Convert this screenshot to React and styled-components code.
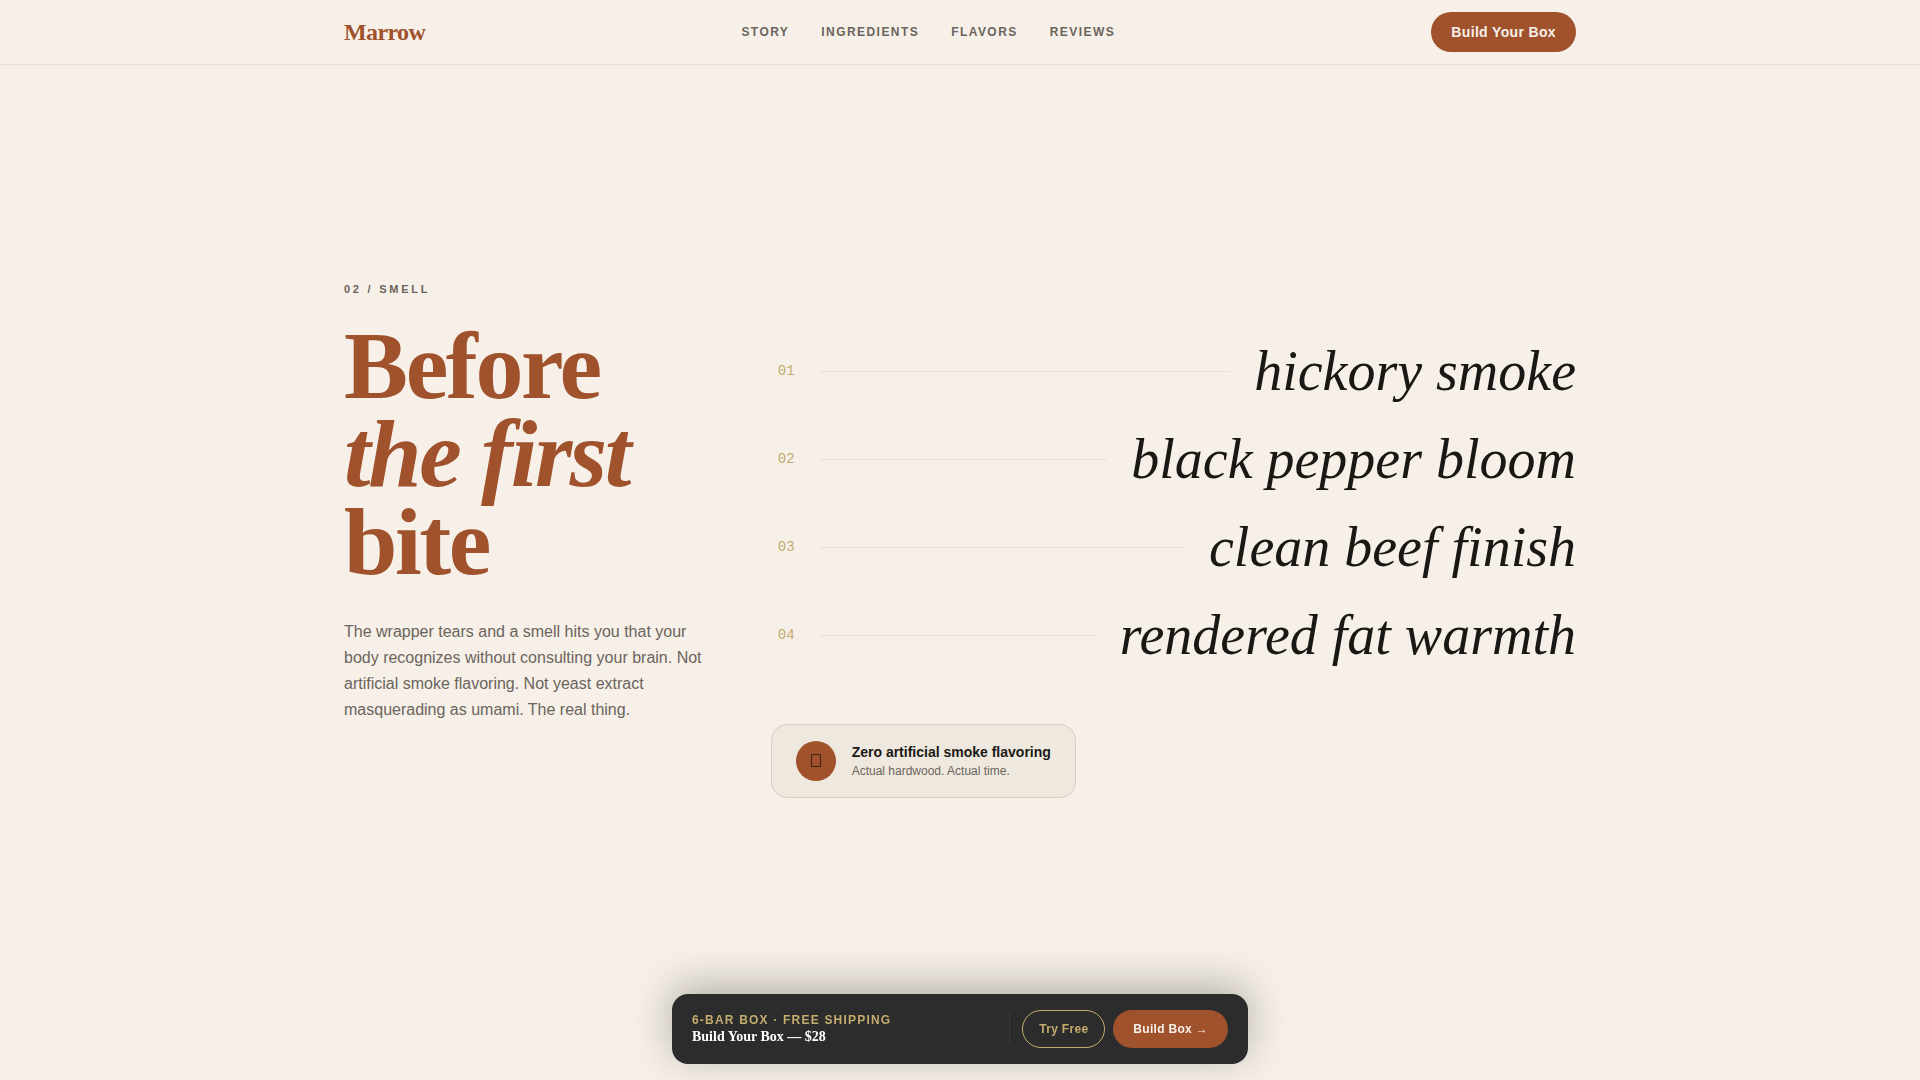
import React from 'react';
import styled, { createGlobalStyle, ThemeProvider } from 'styled-components';

const theme = {
  cream: '#f6f0e8',
  sand: '#efe8de',
  line: '#e8e1d9',
  rust: '#a0522d',
  gold: '#c4ac6e',
  ink: '#1a1814',
  muted: '#6b645c',
  char: '#2c2c2c',
  serif: '"Liberation Serif", serif',
  sans: '"Liberation Sans", sans-serif',
  mono: '"Liberation Mono", monospace',
};

const GlobalStyle = createGlobalStyle`
  * {
    box-sizing: border-box;
  }

  body {
    margin: 0;
    background: ${theme.cream};
    color: ${theme.ink};
    font-family: ${theme.sans};
  }

  h1, p, ol {
    margin: 0;
    padding: 0;
  }
`;

const Container = styled.div`
  width: 100%;
  max-width: 1280px;
  margin: 0 auto;
  padding: 0 24px;
`;

const Header = styled.header`
  position: fixed;
  top: 0;
  left: 0;
  right: 0;
  z-index: 10;
  background: ${(props) => props.theme.cream};
  border-bottom: 1px solid ${(props) => props.theme.line};
`;

const HeaderInner = styled(Container)`
  display: flex;
  align-items: center;
  justify-content: space-between;
  height: 64px;
`;

const Logo = styled.a`
  font: 700 24px/36px ${(props) => props.theme.serif};
  letter-spacing: -0.025em;
  color: ${(props) => props.theme.rust};
  text-decoration: none;
`;

const Nav = styled.nav`
  display: flex;
  gap: 32px;
`;

const NavLink = styled.a`
  font-size: 12px;
  line-height: 18px;
  font-weight: 600;
  letter-spacing: 0.12em;
  text-transform: uppercase;
  text-decoration: none;
  color: ${(props) => props.theme.muted};
`;

const Button = styled.button`
  padding: ${(props) => (props.$outline ? '0 16px' : '0 20px')};
  height: ${(props) => (props.$large ? '40px' : '38px')};
  border: ${(props) => (props.$outline ? `1px solid ${props.theme.gold}` : 'none')};
  border-radius: 20px;
  background: ${(props) => (props.$outline ? 'transparent' : props.theme.rust)};
  color: ${(props) => (props.$outline ? props.theme.gold : props.theme.cream)};
  font-family: inherit;
  font-size: ${(props) => (props.$large ? '14px' : '12px')};
  font-weight: 600;
  letter-spacing: 0.025em;
  white-space: nowrap;
  cursor: pointer;
`;

const Section = styled.section`
  display: flex;
  align-items: center;
  min-height: 100vh;
`;

const Grid = styled(Container)`
  display: grid;
  grid-template-columns: repeat(12, 1fr);
  column-gap: 48px;
`;

const Intro = styled.div`
  grid-column: span 4;
`;

const Eyebrow = styled.p`
  margin-bottom: 26px;
  font-size: 11px;
  line-height: 14px;
  font-weight: 600;
  letter-spacing: 0.25em;
  text-transform: uppercase;
  color: ${(props) => props.theme.muted};
`;

const Title = styled.h1`
  margin-bottom: 33px;
  font: 700 96px/88px ${(props) => props.theme.serif};
  letter-spacing: -0.025em;
  color: ${(props) => props.theme.rust};
`;

const Lead = styled.p`
  font-size: 16px;
  line-height: 26px;
  color: ${(props) => props.theme.muted};
`;

const Notes = styled.div`
  grid-column: span 8;
  padding-top: 49px;
`;

const NoteList = styled.ol`
  display: flex;
  flex-direction: column;
  gap: 8px;
  margin-bottom: 49px;
  list-style: none;
`;

const NoteRow = styled.li`
  display: flex;
  align-items: center;
  gap: 24px;
  padding: 8px 0;
`;

const NoteNumber = styled.span`
  width: 24px;
  font: 400 14px/20px ${(props) => props.theme.mono};
  text-align: right;
  color: ${(props) => props.theme.gold};
`;

const NoteLine = styled.span`
  flex: 1;
  height: 1px;
  background: ${(props) => props.theme.line};
`;

const NoteName = styled.span`
  font: italic 400 56px/64px ${(props) => props.theme.serif};
`;

const Badge = styled.div`
  display: inline-flex;
  align-items: center;
  gap: 16px;
  padding: 16px 24px;
  border: 1px solid #d9d0c4;
  border-radius: 16px;
  background: ${(props) => props.theme.sand};
`;

const BadgeIcon = styled.span`
  display: flex;
  align-items: center;
  justify-content: center;
  width: 40px;
  height: 40px;
  border-radius: 50%;
  background: ${(props) => props.theme.rust};
`;

const BadgeTitle = styled.p`
  font-size: 14px;
  line-height: 20px;
  font-weight: 600;
`;

const BadgeText = styled.p`
  font-size: 12px;
  line-height: 18px;
  color: ${(props) => props.theme.muted};
`;

const OfferBar = styled.aside`
  position: fixed;
  left: 0;
  right: 0;
  bottom: 16px;
  z-index: 10;
  display: flex;
  align-items: center;
  width: 100%;
  max-width: 576px;
  margin: 0 auto;
  padding: 16px 20px;
  border-radius: 16px;
  background: ${(props) => props.theme.char};
  box-shadow: 0 -8px 40px rgba(26, 26, 10, 0.3);
`;

const OfferText = styled.div`
  flex: 1;
`;

const OfferLabel = styled.p`
  font-size: 12px;
  line-height: 16px;
  font-weight: 600;
  letter-spacing: 0.1em;
  text-transform: uppercase;
  color: ${(props) => props.theme.gold};
`;

const OfferPrice = styled.p`
  font: 700 14px/18px ${(props) => props.theme.serif};
  color: #fff;
`;

const OfferActions = styled.div`
  display: flex;
  align-items: center;
  gap: 8px;
`;

const Divider = styled.span`
  width: 1px;
  height: 32px;
  margin-right: 12px;
  background: #3a3a3a;
`;

const links = ['Story', 'Ingredients', 'Flavors', 'Reviews'];

const notes = [
  'hickory smoke',
  'black pepper bloom',
  'clean beef finish',
  'rendered fat warmth',
];

const App = () => {
  return (
    <ThemeProvider theme={theme}>
      <GlobalStyle />
      <Header>
        <HeaderInner>
          <Logo href="#top">Marrow</Logo>
          <Nav>
            {links.map((link) => (
              <NavLink key={link} href={`#${link.toLowerCase()}`}>
                {link}
              </NavLink>
            ))}
          </Nav>
          <Button type="button" $large>Build Your Box</Button>
        </HeaderInner>
      </Header>

      <main>
        <Section>
          <Grid>
            <Intro>
              <Eyebrow>02 / Smell</Eyebrow>
              <Title>
                Before
                <br />
                <em>the first</em>
                <br />
                bite
              </Title>
              <Lead>
                The wrapper tears and a smell hits you that your body recognizes
                without consulting your brain. Not artificial smoke flavoring.
                Not yeast extract masquerading as umami. The real thing.
              </Lead>
            </Intro>
            <Notes>
              <NoteList>
                {notes.map((note, index) => (
                  <NoteRow key={note}>
                    <NoteNumber>{`0${index + 1}`}</NoteNumber>
                    <NoteLine />
                    <NoteName>{note}</NoteName>
                  </NoteRow>
                ))}
              </NoteList>
              <Badge>
                <BadgeIcon>
                  <svg width="12" height="14" viewBox="0 0 12 14" aria-hidden="true">
                    <rect x="1.5" y="0.5" width="9" height="12" fill="none" stroke="#3f2413" />
                  </svg>
                </BadgeIcon>
                <div>
                  <BadgeTitle>Zero artificial smoke flavoring</BadgeTitle>
                  <BadgeText>Actual hardwood. Actual time.</BadgeText>
                </div>
              </Badge>
            </Notes>
          </Grid>
        </Section>
      </main>

      <OfferBar>
        <OfferText>
          <OfferLabel>6-Bar Box · Free Shipping</OfferLabel>
          <OfferPrice>Build Your Box — $28</OfferPrice>
        </OfferText>
        <Divider />
        <OfferActions>
          <Button type="button" $outline>Try Free</Button>
          <Button type="button">Build Box →</Button>
        </OfferActions>
      </OfferBar>
    </ThemeProvider>
  );
};

export default App;
